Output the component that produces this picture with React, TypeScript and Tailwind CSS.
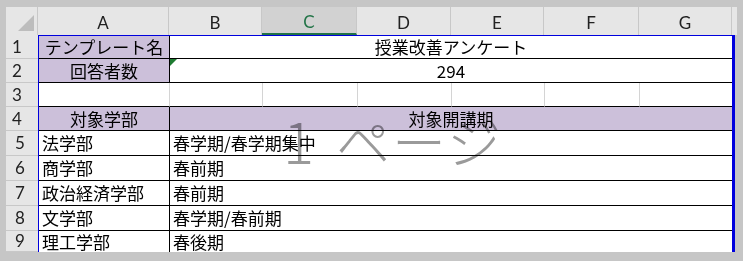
import React from "react";

const HEAD_W = [132, 93, 95, 94, 93, 95, 93];
const BODY_W = [131, 93, 95, 94, 93, 95, 92];
const LETTERS = ["A", "B", "C", "D", "E", "F", "G"];
const MERGED_W = BODY_W.slice(1).reduce((a, b) => a + b, 0);

const jp = "font-['Noto_Sans_CJK_JP',sans-serif]";
const lat = "font-['Lato','Open_Sans',sans-serif]";

function RowNum({ n, h, pl }: { n: number; h: number; pl: number }) {
  return (
    <div
      className={`w-[32px] shrink-0 bg-[#e6e6e6] border-b border-[#c8c8c8] flex items-center ${lat} text-[17px] text-[#222]`}
      style={{ height: h, paddingLeft: pl }}
    >
      {n}
    </div>
  );
}

function Body({ children, top }: { children: React.ReactNode; top?: boolean }) {
  return (
    <div
      className={`flex border-l border-r-[3px] border-[#0000dd] ${top ? "border-t" : ""} bg-white ${jp} text-[17px] text-black`}
    >
      {children}
    </div>
  );
}

export default function App() {
  const lower: [string, string][] = [
    ["法学部", "春学期/春学期集中"],
    ["商学部", "春前期"],
    ["政治経済学部", "春前期"],
    ["文学部", "春学期/春前期"],
    ["理工学部", "春後期"],
  ];

  return (
    <div className="relative w-[743px] h-[261px] overflow-hidden bg-[#c6c6c6] pt-[7px] pl-[6px]">
      {/* column header */}
      <div className="flex h-[28px] w-[731px] bg-[#e6e6e6]">
        <div className="w-[32px] shrink-0 relative border-r border-[#c8c8c8]">
          <svg className="absolute left-[11px] top-[8px]" width="17" height="17" viewBox="0 0 17 17">
            <polygon points="17,0 17,16 1,16" fill="#bdbdbd" />
          </svg>
        </div>
        {LETTERS.map((l, i) => {
          const sel = l === "C";
          return (
            <div
              key={l}
              className={`shrink-0 flex items-center justify-center pt-[3px] ${lat} text-[17px] border-r border-[#c8c8c8] ${
                sel ? "bg-[#d2d2d2] text-[#217346] border-b-2 border-b-[#217346]" : "text-[#222]"
              }`}
              style={{ width: i === 0 ? HEAD_W[i] - 1 : HEAD_W[i] }}
            >
              {l}
            </div>
          );
        })}
        <div className="w-[4px] shrink-0" />
      </div>

      {/* row 1 */}
      <div className="flex">
        <RowNum n={1} h={24} pl={6} />
        <Body top>
          <div
            className="h-[23px] bg-[#ccc0da] border-b border-r border-black flex items-center justify-center"
            style={{ width: BODY_W[0] }}
          >
            テンプレート名
          </div>
          <div className="h-[23px] border-b border-black flex items-center justify-center" style={{ width: MERGED_W }}>
            授業改善アンケート
          </div>
        </Body>
      </div>

      {/* row 2 */}
      <div className="flex">
        <RowNum n={2} h={24} pl={6} />
        <Body>
          <div
            className="h-[24px] bg-[#ccc0da] border-b border-r border-black flex items-center justify-center"
            style={{ width: BODY_W[0] }}
          >
            回答者数
          </div>
          <div
            className="relative h-[24px] border-b border-black flex items-center justify-center"
            style={{ width: MERGED_W }}
          >
            <svg className="absolute left-0 top-0" width="7" height="7" viewBox="0 0 7 7">
              <polygon points="0,0 7,0 0,7" fill="#1e7b31" />
            </svg>
            294
          </div>
        </Body>
      </div>

      {/* row 3 */}
      <div className="flex">
        <RowNum n={3} h={24} pl={6} />
        <Body>
          {BODY_W.map((w, i) => (
            <div
              key={i}
              className={`h-[24px] border-b border-black ${i < 6 ? "border-r border-r-[#d4d4d4]" : ""}`}
              style={{ width: w }}
            />
          ))}
        </Body>
      </div>

      {/* row 4 */}
      <div className="flex">
        <RowNum n={4} h={24} pl={6} />
        <Body>
          <div
            className="h-[24px] bg-[#ccc0da] border-b border-r border-black flex items-center justify-center"
            style={{ width: BODY_W[0] }}
          >
            対象学部
          </div>
          <div
            className="h-[24px] bg-[#ccc0da] border-b border-black flex items-center justify-center"
            style={{ width: MERGED_W }}
          >
            対象開講期
          </div>
        </Body>
      </div>

      {/* rows 5-9 */}
      {lower.map(([a, b], i) => {
        const last = i === lower.length - 1;
        const h = last ? 21 : 25;
        return (
          <div className="flex" key={a}>
            <RowNum n={5 + i} h={h} pl={9} />
            <Body>
              <div
                className={`border-r border-black ${last ? "" : "border-b"} flex items-center pl-[3px] whitespace-nowrap`}
                style={{ width: BODY_W[0], height: h }}
              >
                {a}
              </div>
              <div
                className={`border-black ${last ? "" : "border-b"} flex items-center pl-[3px] whitespace-nowrap`}
                style={{ width: MERGED_W, height: h }}
              >
                {b}
              </div>
            </Body>
          </div>
        );
      })}

      {/* page watermark */}
      <div
        className={`absolute left-[283px] top-[110px] flex items-baseline text-[#9a9a9a] ${jp} font-light mix-blend-multiply pointer-events-none select-none leading-none`}
      >
        <span className="text-[58px]">1</span>
        <span className="text-[54px] ml-[22px] tracking-[2px]">ページ</span>
      </div>
    </div>
  );
}
